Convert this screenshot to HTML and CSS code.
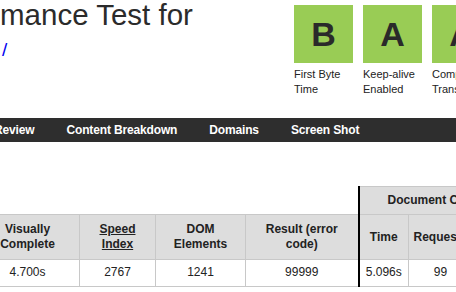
FILE: index.html
```html
<!DOCTYPE html>
<html>
<head>
<meta charset="utf-8">
<link rel="stylesheet" href="styles.css">
</head>
<body>
<header class="top">
  <div class="heading">
    <h1 class="title">mance Test for</h1>
    <a class="url" href="#">/</a>
  </div>
  <div class="grades">
    <div class="grade">
      <div class="grade-box">B</div>
      <div class="grade-label">First Byte<br>Time</div>
    </div>
    <div class="grade">
      <div class="grade-box">A</div>
      <div class="grade-label">Keep-alive<br>Enabled</div>
    </div>
    <div class="grade">
      <div class="grade-box">A</div>
      <div class="grade-label">Compress<br>Transfer</div>
    </div>
  </div>
</header>
<nav class="nav">
  <a class="nav-item" href="#">Review</a>
  <a class="nav-item" href="#">Content Breakdown</a>
  <a class="nav-item" href="#">Domains</a>
  <a class="nav-item" href="#">Screen Shot</a>
</nav>
<table class="results">
  <colgroup>
    <col class="c-vc"><col class="c-si"><col class="c-dom"><col class="c-res"><col class="c-time"><col class="c-req"><col class="c-bytes">
  </colgroup>
  <thead>
    <tr>
      <th class="empty" colspan="4"></th>
      <th class="group sep" colspan="3">Document Complete</th>
    </tr>
    <tr>
      <th>Visually Complete</th>
      <th><a class="hlink" href="#">Speed Index</a></th>
      <th>DOM Elements</th>
      <th>Result (error code)</th>
      <th class="sep">Time</th>
      <th>Requests</th>
      <th>Bytes In</th>
    </tr>
  </thead>
  <tbody>
    <tr>
      <td>4.700s</td>
      <td>2767</td>
      <td>1241</td>
      <td>99999</td>
      <td class="sep">5.096s</td>
      <td>99</td>
      <td>1,586 KB</td>
    </tr>
  </tbody>
</table>
</body>
</html>
```
FILE: styles.css
```css
html, body {
  margin: 0;
  padding: 0;
  background: #fff;
  overflow: hidden;
}
body {
  font-family: "Liberation Sans", Arial, sans-serif;
  color: #222;
  width: 456px;
}
.top {
  display: flex;
  height: 118px;
}
.heading {
  width: 294px;
  flex: none;
}
.title {
  margin: 0;
  font-size: 29.5px;
  font-weight: normal;
  line-height: 30px;
  color: #2b2b2b;
  white-space: nowrap;
}
.url {
  display: block;
  margin: 9px 0 0 2px;
  font-size: 19px;
  line-height: 22px;
  color: #0000ee;
  text-decoration: none;
}
.grades {
  display: flex;
  gap: 10px;
  padding-top: 5px;
  flex: none;
}
.grade {
  width: 59px;
  flex: none;
}
.grade-box {
  height: 58px;
  background: #99cc55;
  color: #2a2a2a;
  font-size: 34px;
  font-weight: bold;
  display: flex;
  align-items: center;
  justify-content: center;
  line-height: 1;
}
.grade-label {
  margin-top: 4px;
  font-size: 11px;
  line-height: 14.5px;
  color: #222;
  white-space: nowrap;
}
.nav {
  display: flex;
  height: 24px;
  align-items: center;
  background: #2e2e2e;
  margin-left: -22px;
  width: 478px;
}
.nav-item {
  padding: 0 16px;
  color: #fff;
  font-size: 12px;
  font-weight: bold;
  text-decoration: none;
  white-space: nowrap;
  letter-spacing: -0.15px;
}
.results {
  margin-top: 44px;
  margin-left: -25px;
  border-collapse: collapse;
  table-layout: fixed;
  width: 647px;
  font-size: 12px;
  line-height: 15px;
}
.c-vc { width: 104px; }
.c-si { width: 76px; }
.c-dom { width: 90px; }
.c-res { width: 113px; }
.c-time { width: 50px; }
.c-req { width: 64px; }
.c-bytes { width: 150px; }
.results th, .results td {
  border: 1px solid #c8c8c8;
  text-align: center;
  color: #222;
}
.results th {
  background: #dddddd;
  font-weight: bold;
  padding: 7px 3px;
}
.results td {
  padding: 5px 3px 6px;
  white-space: nowrap;
}
.results th.group {
  padding: 6px 3px;
  white-space: nowrap;
  text-align: left;
  padding-left: 28px;
}
.results th.empty {
  background: transparent;
  border: none;
  padding: 0;
}
.results .sep {
  border-left: 2px solid #000;
}
.hlink {
  color: #222;
  text-decoration: underline;
}
```
